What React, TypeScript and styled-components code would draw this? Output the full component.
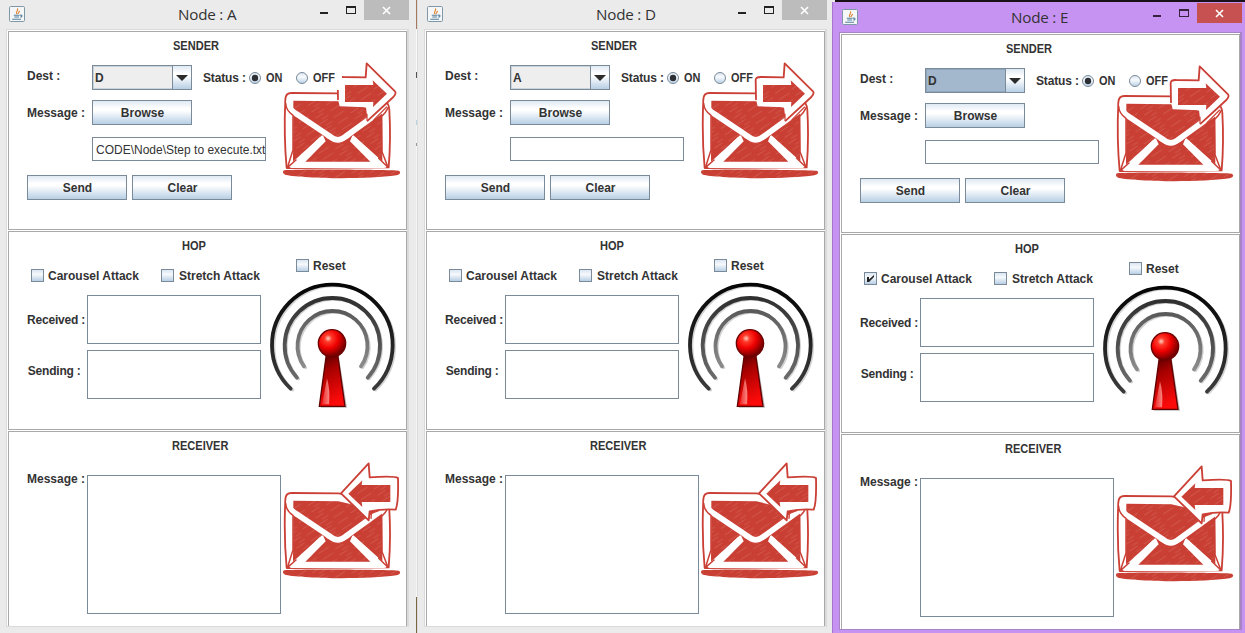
import React from "react";
import styled, { createGlobalStyle } from "styled-components";

const Global = createGlobalStyle`
  * { box-sizing: border-box; }
  body { margin: 0; overflow: hidden; background: #ebebeb; }
`;

const Desktop = styled.div`
  display: flex;
  width: 1245px;
  height: 633px;
  overflow: hidden;
  background: linear-gradient(90deg, #ebebeb 835px, #1a1018 835px);
  font: bold 12px/14px "Liberation Sans", Arial, sans-serif;
  color: #333;
`;

const Seam = styled.div`
  flex: none;
  width: 2px;
  border-right: 1px solid #dcdcdc;
  background: linear-gradient(#a5795f 29px, #fafafa 29px, #fafafa 72px, #555 72px, #555 78px,
    #f4f4f4 78px, #f4f4f4 120px, #bcd3e0 120px, #bcd3e0 125px, #f4f4f4 125px, #f4f4f4 143px,
    #999 143px, #999 146px, #f6f6f6 146px, #f6f6f6 597px, #7a6645 597px);
`;

const Frame = styled.section<{ $active?: boolean; $width: number }>`
  flex: none;
  display: flex;
  flex-direction: column;
  width: ${(p) => p.$width}px;
  height: ${(p) => (p.$active ? 631 : 633)}px;
  margin-top: ${(p) => (p.$active ? 2 : 0)}px;
  padding-left: 6px;
  background: ${(p) => (p.$active ? "#c793f2" : "#ebebeb")};
  border-left: ${(p) => (p.$active ? "1px solid #a774cf" : "0")};
`;

const TitleBar = styled.header<{ $active?: boolean }>`
  display: flex;
  flex: none;
  width: 403px;
  height: ${(p) => (p.$active ? 30 : 29)}px;
  padding-top: ${(p) => (p.$active ? 1 : 0)}px;
`;

const AppIcon = styled.svg`
  flex: none;
  margin: 6px 0 0 3px;
`;

const Caption = styled.h1<{ $inset: number }>`
  flex: 1;
  margin: 4px 0 0 ${(p) => p.$inset}px;
  font: 15.2px/20px "Open Sans", "Segoe UI", sans-serif;
  letter-spacing: -0.2px;
  color: #333;
  white-space: nowrap;
`;

const Controls = styled.svg`
  flex: none;
`;

const Client = styled.main<{ $active?: boolean }>`
  width: 403px;
  height: 598px;
  flex: none;
  overflow: hidden;
  border: 1px solid ${(p) => (p.$active ? "#a884c4" : "#dadada")};
  border-width: 1px 2px 1px 1px;
  background: #fff;
  padding: 1px 0 0 1px;
`;

const Section = styled.section`
  width: 399px;
  height: 199px;
  margin-bottom: 1px;
  border: 1px solid #a9a9a9;
  padding-top: 7px;
`;

const Heading = styled.h2<{ $inset: number }>`
  width: fit-content;
  margin: 0 0 0 ${(p) => p.$inset}px;
  font: inherit;
  transform: scaleX(0.92);
  transform-origin: left;
`;

const Body = styled.div`
  display: flex;
`;

const Form = styled.div<{ $width: number }>`
  flex: none;
  width: ${(p) => p.$width}px;
  padding-left: 18px;
`;

const Row = styled.div<{ $top: number; $height: number }>`
  display: flex;
  align-items: center;
  margin-top: ${(p) => p.$top}px;
  height: ${(p) => p.$height}px;
  white-space: nowrap;
`;

const Label = styled.span<{ $width: number; $lift?: number; $tight?: boolean }>`
  flex: none;
  width: ${(p) => p.$width}px;
  padding-bottom: ${(p) => p.$lift ?? 0}px;
  white-space: nowrap;
  letter-spacing: ${(p) => (p.$tight ? "-0.2px" : "normal")};
`;

const metal = "linear-gradient(#dfe9f3 0%, #fff 32%, #fff 42%, #b8cfe5 100%)";

const Button = styled.button`
  width: 100px;
  height: 25px;
  margin: 0 5px 0 0;
  padding: 0 0 0 1px;
  border: 1px solid #7a8a99;
  background: ${metal};
  color: #333;
  font: inherit;
`;

const Combo = styled.div<{ $active?: boolean }>`
  display: flex;
  flex: none;
  width: 100px;
  height: 25px;
  border: 1px solid #7a8a99;
  box-shadow: inset 0 0 0 1px ${(p) => (p.$active ? "#8fa6bf" : "#c9d3dc")};
  background: ${(p) => (p.$active ? "#a3b8cc" : "#eee")};
  padding-left: 2px;
  line-height: 24px;
`;

const ComboValue = styled.span`
  flex: 1;
`;

const ComboArrow = styled.span`
  display: flex;
  align-items: center;
  justify-content: center;
  width: 19px;
  border-left: 1px solid #7a8a99;
  background: ${metal};
`;

const StatusText = styled.span`
  flex: none;
  width: 46px;
  margin-left: 11px;
  letter-spacing: -0.15px;
`;

const Choice = styled.label`
  display: flex;
  flex: none;
  align-items: center;
  gap: 5px;
  height: 25px;
  svg { flex: none; }
`;

const ChoiceText = styled.span`
  transform: scaleX(0.91);
  transform-origin: left;
`;

const OnChoice = styled(Choice)`
  width: 47px;
`;

const OffChoice = styled(Choice)<{ $opaque?: boolean }>`
  position: relative;
  width: ${(p) => (p.$opaque ? 46 : 38)}px;
  background: ${(p) => (p.$opaque ? "#fff" : "transparent")};
  z-index: ${(p) => (p.$opaque ? 1 : 0)};
`;

const Box = styled.span`
  display: flex;
  flex: none;
  width: 13px;
  height: 13px;
  border: 1px solid #7a8a99;
  background: linear-gradient(#dbe6f2, #f6f9fc 40%, #b8cfe5);
`;

const Field = styled.div`
  width: 174px;
  height: 24px;
  border: 1px solid #7a8a99;
  padding-left: 3px;
  background: #fff;
  overflow: hidden;
  font-weight: normal;
  line-height: 24px;
`;

const TextArea = styled.div<{ $width: number; $height: number }>`
  flex: none;
  width: ${(p) => p.$width}px;
  height: ${(p) => p.$height}px;
  border: 1px solid #7a8a99;
  background: #fff;
`;

const Side = styled.div<{ $left: number; $top: number }>`
  flex: none;
  margin: ${(p) => p.$top}px 0 0 ${(p) => p.$left}px;
  svg { display: block; }
`;

const CheckCell = styled.label<{ $width: number; $gap?: number }>`
  display: flex;
  align-items: center;
  gap: ${(p) => p.$gap ?? 4}px;
  width: ${(p) => p.$width}px;
  margin-left: 4px;
  margin-right: -4px;
`;

const ResetCell = styled.label`
  display: flex;
  align-items: center;
  gap: 4px;
  height: 13px;
  margin: 6px 0 9px 27px;
`;

const MessageRow = styled.div`
  display: flex;
  margin-top: 22px;
  line-height: 8px;
`;

function JavaCup() {
  return (
    <AppIcon width="16" height="16" viewBox="0 0 16 16" fill="none">
      <rect x=".5" y=".5" width="15" height="15" rx="1.2" fill="#f4f6f7" stroke="#7f98a8" />
      <path d="M8 8C5.6 6 10 5 8.4 2.4M9.3 8.1C8.3 6.9 10.3 6.3 10.6 5" stroke="#e08a3c" strokeWidth="1.2" />
      <path d="M4.8 9.2h5.8M5.3 11h4.7M3.2 13.2h8.8M11 9.2c2.8-.6 2.4 1.7.3 2.1" stroke="#55809f" strokeWidth="1.1" />
    </AppIcon>
  );
}

function WindowButtons({ active }: { active?: boolean }) {
  const ink = active ? "#38233f" : "#222";
  return (
    <Controls width="90" height="20" viewBox="0 0 90 20" shapeRendering="crispEdges">
      <path d="M1 12h8v2H1z" fill={ink} />
      <path d="M27 6h10v8H27zM28 8v5h8V8z" fill={ink} fillRule="evenodd" />
      <path d="M45 0h45v20H45z" fill={active ? "#c75050" : "#bcbcbc"} />
      <path d="M64 7l7 7M71 7l-7 7" stroke="#fff" strokeWidth="1.6" shapeRendering="auto" />
    </Controls>
  );
}

function Radio({ on }: { on?: boolean }) {
  return (
    <svg width="12" height="12" viewBox="0 0 12 12">
      <defs>
        <linearGradient id="radio" x2="0" y2="1">
          <stop stopColor="#d6e3f0" /><stop offset=".4" stopColor="#f8fbfd" /><stop offset="1" stopColor="#b8cfe5" />
        </linearGradient>
      </defs>
      <circle cx="6" cy="6" r="5.5" fill="url(#radio)" stroke="#7a8a99" />
      {on && <circle cx="6" cy="6" r="3.2" fill="#2c3035" />}
    </svg>
  );
}

function Check({ checked }: { checked?: boolean }) {
  return (
    <Box>
      {checked && (
        <svg width="11" height="11" viewBox="0 0 11 11">
          <path d="M2 4h2v2.4L9 2v2L4 9H2z" fill="#222" />
        </svg>
      )}
    </Box>
  );
}

function Envelope({ incoming }: { incoming?: boolean }) {
  const red = "#cb4036";
  const h = incoming ? "hatch-in" : "hatch-out";
  return (
    <svg width="120" height="118" viewBox="36 36 360 354" strokeLinejoin="round" strokeLinecap="round">
      <defs>
        <pattern id={h} width="97" height="22" patternUnits="userSpaceOnUse" patternTransform="rotate(-33)">
          <rect width="97" height="22" fill="#c93f34" />
          <path d="M4 4h26M52 10h34M20 17h18" stroke="#d8695f" strokeWidth="1.6" />
        </pattern>
      </defs>
      <path d="M42 361C90 357 340 359 386 362C394 366 391 374 379 376C290 389 100 386 48 375C38 373 37 364 42 361Z" fill={`url(#${h})`} />
      <path d="M46 148Q47 129 64 129L205 130L340 150Q358 158 358 180Q363 270 356 352L50 354Q41 260 46 148Z" fill="#fff" stroke={red} strokeWidth="5.5" />
      <path d="M70 152L205 154L336 184L337 334L250 256L203 277L156 256L69 335Z" fill={`url(#${h})`} />
      <path d="M106 335L167 274L158 254Q203 296 248 254L240 274L301 335Z" fill={`url(#${h})`} />
      <path d="M57 157Q52 176 78 191L181 260Q203 279 226 260L342 176" fill="none" stroke="#fff" strokeWidth="17" />
      <path d="M156 267L80 342M249 267L330 342" stroke="#fff" strokeWidth="17" strokeLinecap="butt" />
      <path d="M66 345H342" stroke="#fff" strokeWidth="18" />
      <path d="M47 160Q48 182 69 196V300L52 353M355 172Q347 189 335 199L336 305L354 352M52 353L78 330M354 352L326 325" fill="none" stroke={red} strokeWidth="4.5" />
      {incoming ? (
        <>
          <path d="M296 40L213 130L296 211L299 184Q339 176 377 179Q386 158 384 84Q374 77 299 82Z" fill="#fff" stroke={red} strokeWidth="5.5" />
          <path d="M277 91L235 131L277 171L275 156H361V105H275Z" fill={`url(#${h})`} />
          <path d="M303 205L304 190L326 182" fill="none" stroke={red} strokeWidth="4" />
        </>
      ) : (
        <>
          <path d="M290 40L375 124Q380 129 370 141L293 212L288 172L209 169Q200 139 203 89Q205 80 220 81L287 82Z" fill="#fff" stroke="none" />
          <path d="M204 148L203 89Q205 80 220 81L287 82L290 40L375 124Q380 129 370 141L293 212" fill="none" stroke={red} strokeWidth="5.5" />
          <path d="M308 91L351 131L309 171L310 156H225V105H310Z" fill={`url(#${h})`} />
          <path d="M291 192V211M312 209L350 171" fill="none" stroke={red} strokeWidth="3.5" />
        </>
      )}
    </svg>
  );
}

function Antenna() {
  return (
    <svg width="130" height="130" viewBox="27 93 390 390" fill="none" strokeLinecap="round">
      <defs>
        <linearGradient id="arcOuter" x2="0" y2="1"><stop stopColor="#050505" /><stop offset="1" stopColor="#3b3b3b" /></linearGradient>
        <linearGradient id="arcMid" x2="0" y2="1"><stop stopColor="#303030" /><stop offset="1" stopColor="#6a6a6a" /></linearGradient>
        <linearGradient id="arcInner" x2="0" y2="1"><stop stopColor="#5a5a5a" /><stop offset="1" stopColor="#8b8b8b" /></linearGradient>
        <radialGradient id="ball" cx=".36" cy=".32" r=".66">
          <stop stopColor="#ffd0c0" /><stop offset=".2" stopColor="#ff3a2a" /><stop offset=".55" stopColor="#ef0000" /><stop offset="1" stopColor="#750000" />
        </radialGradient>
        <linearGradient id="mast" x2=".25" y2="1">
          <stop stopColor="#4b0000" /><stop offset=".35" stopColor="#a50000" /><stop offset="1" stopColor="#fb0a0a" />
        </linearGradient>
        <linearGradient id="shine"><stop stopColor="#e33" /><stop offset="1" stopColor="#ffa8a0" /></linearGradient>
      </defs>
      <g stroke="#d3d3d3" strokeWidth="9" transform="translate(5 4)">
        <path d="M93 416A181 181 0 1 1 342 416M111 383A143 143 0 1 1 322 383M132 349A105 105 0 1 1 303 349" />
      </g>
      <path d="M92 416A181 181 0 1 1 342 416" stroke="url(#arcOuter)" strokeWidth="11.5" />
      <path d="M111 383A143 143 0 1 1 323 383" stroke="url(#arcMid)" strokeWidth="11.5" />
      <path d="M132 349A105 105 0 1 1 303 349" stroke="url(#arcInner)" strokeWidth="11.5" />
      <path d="M202 316L182 473H261L236 316Z" fill="#bbb" />
      <path d="M199 314L178 469H255L233 314Z" fill="url(#mast)" stroke="#620000" strokeWidth="4" />
      <path d="M201 385L186 463H207Q211 420 201 385Z" fill="url(#shine)" opacity=".8" />
      <circle cx="216" cy="280" r="41" fill="url(#ball)" stroke="#6b0000" strokeWidth="4" />
    </svg>
  );
}

interface NodeProps {
  name: string;
  width: number;
  dest: string;
  file?: string;
  active?: boolean;
  carousel?: boolean;
  opaqueOff?: boolean;
}

function NodeWindow({ name, width, dest, file, active, carousel, opaqueOff }: NodeProps) {
  return (
    <Frame $active={active} $width={width}>
      <TitleBar $active={active}>
        <JavaCup />
        <Caption $inset={153}>Node : {name}</Caption>
        <WindowButtons active={active} />
      </TitleBar>
      <Client $active={active}>
        <Section>
          <Heading $inset={164}>SENDER</Heading>
          <Body>
            <Form $width={272}>
              <Row $top={12} $height={25}>
                <Label $width={65} $lift={3}>Dest :</Label>
                <Combo $active={active}>
                  <ComboValue>{dest}</ComboValue>
                  <ComboArrow>
                    <svg width="12" height="6" viewBox="0 0 12 6"><path d="M0 0h12L6 6z" fill="#2b2b2b" /></svg>
                  </ComboArrow>
                </Combo>
                <StatusText>Status :</StatusText>
                <OnChoice><Radio on /><ChoiceText>ON</ChoiceText></OnChoice>
                <OffChoice $opaque={opaqueOff}><Radio /><ChoiceText>OFF</ChoiceText></OffChoice>
              </Row>
              <Row $top={10} $height={25}>
                <Label $width={65}>Message :</Label>
                <Button>Browse</Button>
              </Row>
              <Row $top={12} $height={24}>
                <Label $width={65} />
                <Field>{file}</Field>
              </Row>
              <Row $top={14} $height={25}>
                <Button>Send</Button>
                <Button>Clear</Button>
              </Row>
            </Form>
            <Side $left={1} $top={9}><Envelope /></Side>
          </Body>
        </Section>
        <Section>
          <Heading $inset={173}>HOP</Heading>
          <Body>
            <Form $width={260}>
              <Row $top={10} $height={25}>
                <CheckCell $width={130}><Check checked={carousel} />Carousel Attack</CheckCell>
                <CheckCell $width={110} $gap={5}><Check />Stretch Attack</CheckCell>
              </Row>
              <Row $top={7} $height={49}>
                <Label $width={60} $tight>Received :</Label>
                <TextArea $width={174} $height={49} />
              </Row>
              <Row $top={6} $height={49}>
                <Label $width={60} $lift={8} $tight>&#8202;Sending :</Label>
                <TextArea $width={174} $height={49} />
              </Row>
            </Form>
            <Side $left={0} $top={0}>
              <ResetCell><Check />Reset</ResetCell>
              <Antenna />
            </Side>
          </Body>
        </Section>
        <Section>
          <Heading $inset={163}>RECEIVER</Heading>
          <Body>
            <Form $width={272}>
              <MessageRow>
                <Label $width={60}>Message :</Label>
                <TextArea $width={194} $height={139} />
              </MessageRow>
            </Form>
            <Side $left={1} $top={9}><Envelope incoming /></Side>
          </Body>
        </Section>
      </Client>
    </Frame>
  );
}

export default function App() {
  return (
    <Desktop>
      <Global />
      <NodeWindow name="A" width={416} dest="D" file={"CODE\\Node\\Step to execute.txt"} opaqueOff />
      <Seam />
      <NodeWindow name="D" width={414} dest="A" />
      <NodeWindow name="E" width={413} dest="D" active carousel />
    </Desktop>
  );
}
